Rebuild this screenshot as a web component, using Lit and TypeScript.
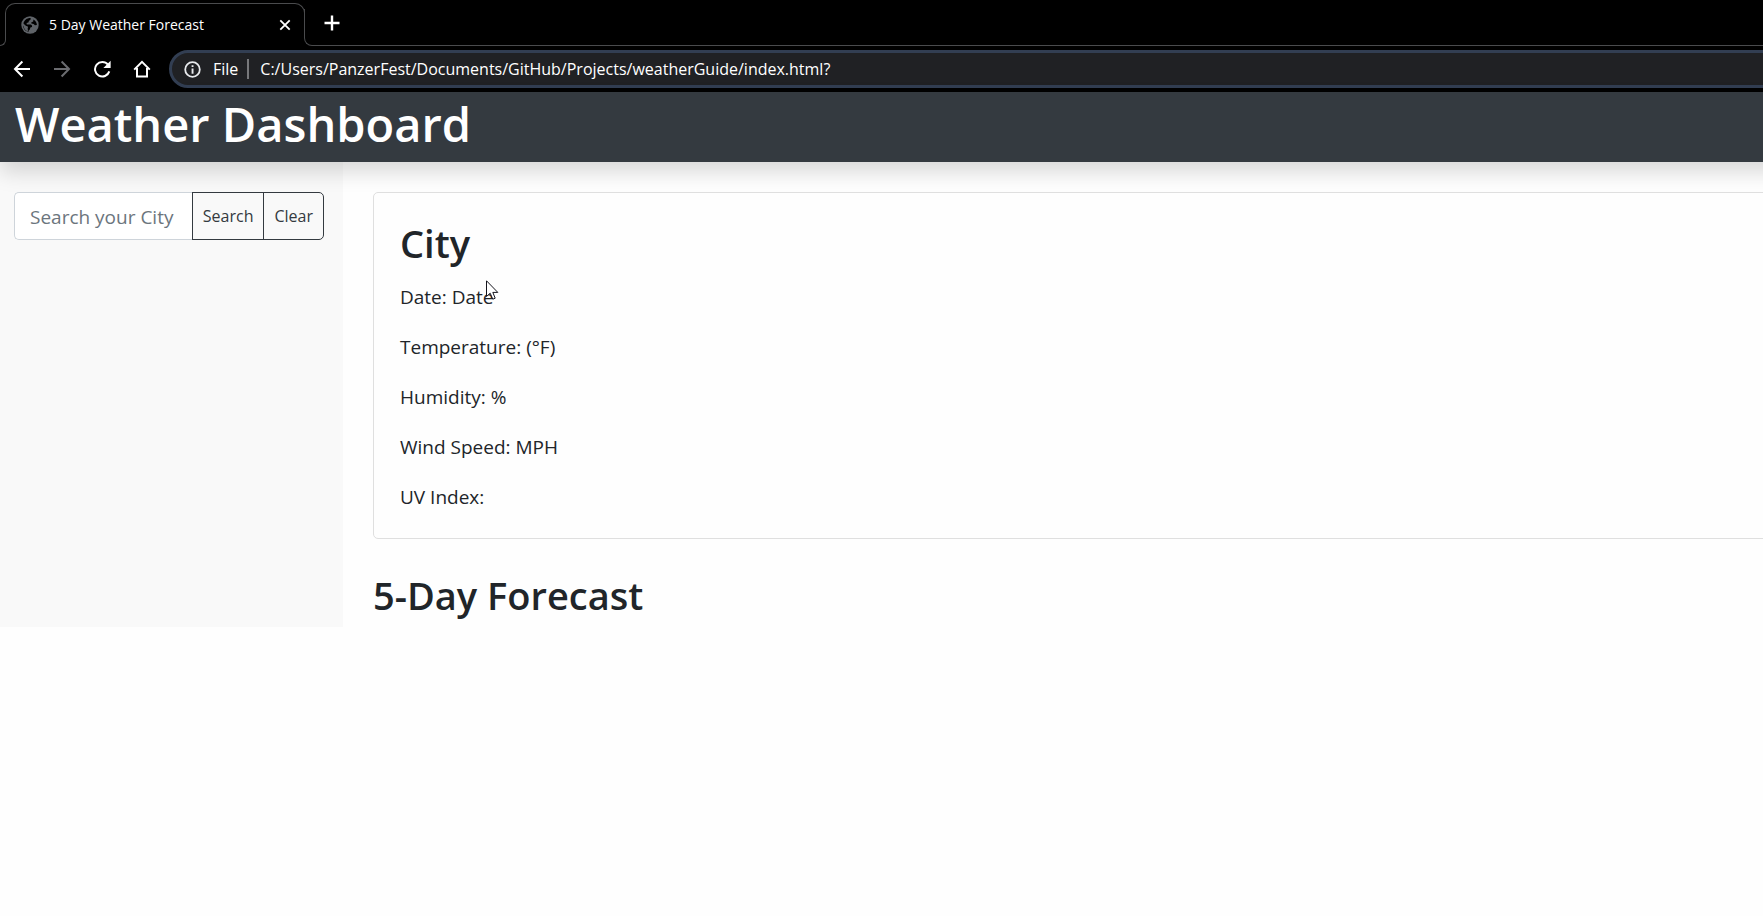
import { LitElement, html, css } from "lit";
import { customElement, state } from "lit/decorators.js";

@customElement("browser-chrome")
export class BrowserChrome extends LitElement {
  static styles = css`
    :host {
      display: block;
      background: #000;
      color: #fff;
      overflow: hidden;
    }
    button {
      display: inline-flex;
      align-items: center;
      justify-content: center;
      padding: 0;
      border: 0;
      background: none;
      color: inherit;
    }
    .tabs {
      display: flex;
      align-items: flex-end;
      height: 46px;
    }
    .foot {
      flex: none;
      box-sizing: border-box;
      width: 6px;
      height: 8px;
      border: solid #4a4b4d;
      border-width: 0 1px 1px 0;
      border-bottom-right-radius: 6px;
    }
    .tab {
      flex: none;
      box-sizing: border-box;
      display: flex;
      align-items: center;
      width: 300px;
      height: 43px;
      margin-left: -1px;
      padding: 0 9px 0 15px;
      border: 1px solid #4a4b4d;
      border-bottom: 0;
      border-radius: 10px 10px 0 0;
      font-size: 14px;
    }
    .foot + .tab {
      clip-path: polygon(0 0, 100% 0, 100% 35px, 0 35px);
    }
    .tab-title {
      flex: 1;
      margin-left: 10px;
      white-space: nowrap;
    }
    .tab-close {
      width: 20px;
      height: 20px;
    }
    .rest {
      flex: 1;
      display: flex;
      align-items: flex-start;
      height: 36px;
      margin-left: -1px;
      border-bottom: 1px solid #4a4b4d;
      border-left: 1px solid #4a4b4d;
      border-bottom-left-radius: 8px;
      clip-path: inset(0);
    }
    .new-tab {
      width: 28px;
      height: 28px;
      margin-left: 13px;
    }
    .tools {
      display: flex;
      align-items: center;
      gap: 16px;
      height: 46px;
      padding-left: 10px;
    }
    .tool {
      width: 24px;
      height: 24px;
    }
    .tool.off {
      color: #6b6c70;
    }
    .address {
      flex: 1;
      display: flex;
      align-items: center;
      box-sizing: border-box;
      height: 38px;
      margin: 0 -40px 0 -1px;
      padding: 0 20px 0 12px;
      border: 3px solid #323e52;
      border-radius: 19px;
      background: #202124;
      font-size: 16px;
    }
    .scheme {
      margin: 0 11px 0 12px;
      padding-right: 9px;
      border-right: 2px solid #77787b;
      line-height: 20px;
    }
    .url {
      flex: 1;
      min-width: 0;
      padding: 0;
      border: 0;
      outline: 0;
      background: none;
      color: #fff;
      font: inherit;
    }
  `;

  render() {
    return html`
      <div class="tabs">
        <span class="foot"></span>
        <div class="tab">
          <svg width="18" height="18" viewBox="0 0 18 18">
            <circle cx="9" cy="9" r="8.7" fill="#5f6368" />
            <path d="M9.6 2 C9.9 3.4 9.4 4.4 8 4.7 L7.4 6.4 L5.6 7 L5.8 8.4 L9.8 8.6 C11 9 11.2 10 11 11 L9.4 11.6 L8.8 13.4 L7.6 14.4 L7.6 15.8 C4.4 15.2 2.2 12.6 2.1 9.4 L6 12.2 L7 11.4 L6.8 10.4 L3.6 9.4 L2.4 7.2 C3.2 4.2 6 1.9 9.6 2 Z" fill="#000" fill-rule="evenodd" />
            <path d="M2.3 7.4 L6.6 11.6 L7 15.4 C4 14.4 2 11.6 2.3 7.4 Z" fill="#5f6368" />
            <path d="M12.4 3.4 C14.4 4.6 15.8 6.4 15.9 9 L14 9.2 L12.6 8 L10.4 7.6 L10.2 6.4 L12.2 5.4 Z" fill="#000" />
          </svg>
          <span class="tab-title">5 Day Weather Forecast</span>
          <button class="tab-close" aria-label="Close tab">
            <svg width="12" height="12" viewBox="0 0 12 12" fill="none" stroke="currentColor" stroke-width="1.8"><path d="M1.3 1.3l9.4 9.4M10.7 1.3l-9.4 9.4" /></svg>
          </button>
        </div>
        <div class="rest">
          <button class="new-tab" aria-label="New tab">
            <svg width="16" height="16" viewBox="0 0 16 16" fill="none" stroke="currentColor" stroke-width="2.4"><path d="M8 .5v15M.5 8h15" /></svg>
          </button>
        </div>
      </div>
      <div class="tools">
        <button class="tool" aria-label="Back">
          <svg width="18" height="18" viewBox="0 0 18 18" fill="none" stroke="currentColor" stroke-width="2"><path d="M17 9H2M9.4 1.5L2 9l7.4 7.5" /></svg>
        </button>
        <button class="tool off" aria-label="Forward" disabled>
          <svg width="18" height="18" viewBox="0 0 18 18" fill="none" stroke="currentColor" stroke-width="2"><path d="M1 9h15M8.6 1.5L16 9l-7.4 7.5" /></svg>
        </button>
        <button class="tool" aria-label="Reload">
          <svg width="18" height="18" viewBox="0 0 18 18"><path d="M15 4.6A7.3 7.3 0 1 0 16.3 11.4" fill="none" stroke="currentColor" stroke-width="2" /><path d="M17.6.8V8H10.4z" fill="currentColor" /></svg>
        </button>
        <button class="tool" aria-label="Home">
          <svg width="18" height="18" viewBox="0 0 18 18" fill="none" stroke="currentColor" stroke-width="2"><path d="M1.2 9.6L9 1.8l7.8 7.8M4 8v8.4h10V8" /></svg>
        </button>
        <div class="address">
          <svg width="17" height="17" viewBox="0 0 17 17"><circle cx="8.5" cy="8.5" r="7.3" fill="none" stroke="#e8eaed" stroke-width="1.8" /><path d="M7.6 7.5h1.9v5.2H7.6zM7.6 4.2h1.9v1.9H7.6z" fill="#e8eaed" /></svg>
          <span class="scheme">File</span>
          <input class="url" type="text" aria-label="Address" value="C:/Users/PanzerFest/Documents/GitHub/Projects/weatherGuide/index.html?" />
        </div>
      </div>
    `;
  }
}

@customElement("app-root")
export class AppRoot extends LitElement {
  static styles = css`
    :host {
      display: block;
      position: relative;
      min-height: 100vh;
      overflow: hidden;
      background: #fefefe;
      color: #212529;
      font-family: "Open Sans", "Noto Sans", sans-serif;
      font-size: 19px;
      line-height: 30px;
    }
    .chrome {
      line-height: 20px;
    }
    .banner {
      position: relative;
      margin-right: -40px;
      padding: 2px 15px 8px;
      background: #343a40;
      box-shadow: 0 10px 20px rgba(0, 0, 0, 0.15);
      color: #fff;
    }
    h1,
    h2,
    p {
      margin: 0;
      font-weight: 600;
    }
    h1 {
      font-size: 47px;
      line-height: 60px;
    }
    h2 {
      font-size: 38px;
      line-height: 48px;
    }
    .layout {
      display: flex;
      margin-right: -40px;
    }
    .side {
      flex: none;
      box-sizing: border-box;
      width: 343px;
      padding: 30px 19px 30px 14px;
      background: #f9f9f9;
    }
    .search {
      display: flex;
      height: 48px;
    }
    .city-input,
    .action {
      box-sizing: border-box;
      margin: 0;
      font-family: inherit;
    }
    .city-input {
      flex: 1;
      min-width: 0;
      padding: 2px 15px 0;
      border: 1px solid #ced4da;
      border-right: 0;
      border-radius: 5px 0 0 5px;
      background: #fff;
      color: #495057;
      font-size: 19px;
    }
    .city-input::placeholder {
      color: #6c757d;
      opacity: 1;
    }
    .action {
      padding: 0 10px;
      border: 1px solid #343a40;
      background: none;
      color: #343a40;
      font-size: 16px;
    }
    .action + .action {
      margin-left: -1px;
      border-radius: 0 5px 5px 0;
    }
    .main {
      flex: 1;
      padding: 30px 0 8px 30px;
    }
    .card {
      padding: 26px;
      border: 1px solid #dfdfdf;
      border-radius: 5px;
      background: #fefefe;
    }
    .facts {
      display: grid;
      gap: 20px;
      margin-top: 15px;
    }
    .facts p {
      font-weight: 400;
    }
    .forecast {
      margin-top: 32px;
    }
    .cursor {
      position: absolute;
      left: 486px;
      top: 280px;
    }
  `;

  @state() private city = "";

  private facts = ["Date: Date", "Temperature: (°F)", "Humidity: %", "Wind Speed: MPH", "UV Index:"];

  private onInput(e: Event) {
    this.city = (e.target as HTMLInputElement).value;
  }

  private clear() {
    this.city = "";
  }

  render() {
    return html`
      <browser-chrome class="chrome"></browser-chrome>
      <header class="banner"><h1>Weather Dashboard</h1></header>
      <div class="layout">
        <aside class="side">
          <form class="search" @submit=${(e: Event) => e.preventDefault()}>
            <input class="city-input" type="text" aria-label="Search your City" placeholder="Search your City" .value=${this.city} @input=${this.onInput} />
            <button class="action" type="submit">Search</button>
            <button class="action" type="button" @click=${this.clear}>Clear</button>
          </form>
        </aside>
        <main class="main">
          <section class="card">
            <h2>City</h2>
            <div class="facts">${this.facts.map((f) => html`<p>${f}</p>`)}</div>
          </section>
          <h2 class="forecast">5-Day Forecast</h2>
        </main>
      </div>
      <svg class="cursor" width="13" height="21" viewBox="0 0 13 21">
        <path d="M.5 .8V16.5L4.2 13.2L6.8 19.2L9.2 18.2L6.8 12.4H11.8Z" fill="#fff" stroke="#14141c" stroke-width="1" />
      </svg>
    `;
  }
}
